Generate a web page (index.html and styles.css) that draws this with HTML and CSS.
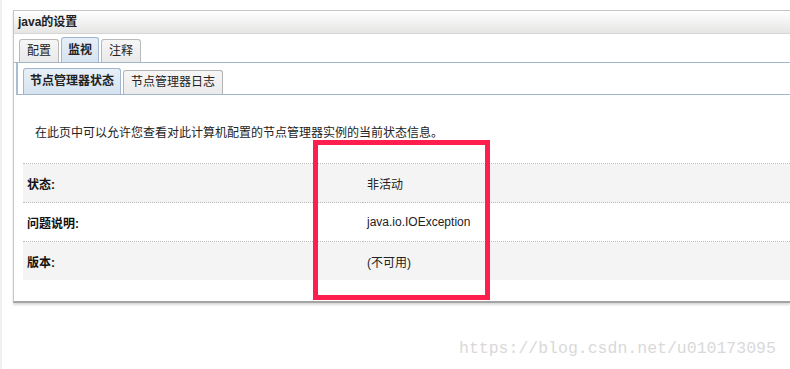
FILE: index.html
```html
<!DOCTYPE html>
<html lang="zh-CN">
<head>
    <meta charset="UTF-8">
    <title>java的设置</title>
    <link rel="stylesheet" href="styles.css">
</head>
<body>
    <div class="window">
        <div class="titlebar">java的设置</div>

        <div class="tabs">
            <span class="tab">配置</span>
            <span class="tab active">监视</span>
            <span class="tab">注释</span>
        </div>

        <div class="subbar">
            <span class="subtab active">节点管理器状态</span>
            <span class="subtab">节点管理器日志</span>
        </div>

        <div class="content">
            <p class="intro">在此页中可以允许您查看对此计算机配置的节点管理器实例的当前状态信息。</p>
            <table class="info">
                <tr class="odd">
                    <th>状态:</th>
                    <td>非活动</td>
                </tr>
                <tr>
                    <th>问题说明:</th>
                    <td>java.io.IOException</td>
                </tr>
                <tr class="odd">
                    <th>版本:</th>
                    <td>(不可用)</td>
                </tr>
            </table>
        </div>
    </div>

    <!-- annotation drawn over the screenshot -->
    <div class="highlight"></div>
    <div class="watermark">https://blog.csdn.net/u010173095</div>
</body>
</html>
```

FILE: styles.css
```css
body {
    margin: 0;
    background: #fff;
    font-family: "Liberation Sans", "Noto Sans CJK SC", sans-serif;
    font-size: 12px;
    color: #222;
    height: 369px;
    border-left: 2px solid #f0f0f0;
    box-sizing: border-box;
}

.window {
    margin: 10px 0 0 11px;
    height: 290px;
    border: 1px solid #c6c6c6;
    border-right: none;
    border-bottom: 2px solid #a4a4a4;
    box-shadow: 0 2px 2px rgba(0,0,0,0.15);
    display: flex;
    flex-direction: column;
}

.titlebar {
    height: 22px;
    line-height: 22px;
    padding-left: 4px;
    font-weight: bold;
    color: #222;
    background: linear-gradient(#ffffff, #e5e6e4);
    border-bottom: 1px solid #d6d6d6;
}

.tabs {
    display: flex;
    align-items: flex-end;
    gap: 2px;
    height: 28px;
    padding-left: 5px;
    border-bottom: 1px solid #a3b6ca;
}

.tab {
    height: 22px;
    line-height: 22px;
    padding: 0 7px;
    border: 1px solid #b9b9b9;
    border-bottom: none;
    border-radius: 3px 3px 0 0;
    background: linear-gradient(#f6f6f6, #e9e9e9);
    color: #222;
}

.tab.active {
    height: 24px;
    line-height: 24px;
    padding: 0 6px;
    font-weight: bold;
    border-color: #a0b6cf;
    background: linear-gradient(#e6eff8, #d6e3f0);
}

.subbar {
    display: flex;
    align-items: flex-end;
    gap: 2px;
    height: 31px;
    margin-left: 2px;
    padding-left: 5px;
    border-left: 2px solid #a9bdd3;
    border-bottom: 1px solid #a3b6ca;
}

.subtab {
    height: 23px;
    line-height: 23px;
    padding: 0 7px;
    border: 1px solid #b4b4b4;
    border-bottom: none;
    border-radius: 3px 3px 0 0;
    background: linear-gradient(#f6f6f6, #eaeaea);
}

.subtab.active {
    height: 25px;
    line-height: 25px;
    padding: 0 6px;
    font-weight: bold;
    border-color: #a0b6cf;
    background: linear-gradient(#e8f0f8, #d5e3f0);
}

.content {
    padding: 0 0 0 9px;
}

.intro {
    margin: 30px 0 0 12px;
    line-height: 16px;
}

.info {
    margin-top: 22px;
    width: calc(100% + 20px);
    border-collapse: collapse;
    border-top: 1px dotted #bdbdbd;
}

.info tr + tr {
    border-top: 1px dotted #bdbdbd;
}

.info tr.odd {
    background: #f4f4f4;
}

.info th,
.info td {
    height: 38px;
    padding: 0 4px;
    text-align: left;
    vertical-align: middle;
}

.info th {
    width: 332px;
    font-weight: bold;
    color: #111;
}

.info td {
    color: #222;
}

.highlight {
    position: absolute;
    left: 313px;
    top: 140px;
    width: 167px;
    height: 150px;
    border: 5px solid #ff1f4f;
}

.watermark {
    position: absolute;
    left: 459px;
    top: 339px;
    font-family: "Liberation Mono", monospace;
    font-size: 16.5px;
    color: #d9d9d9;
}
```
